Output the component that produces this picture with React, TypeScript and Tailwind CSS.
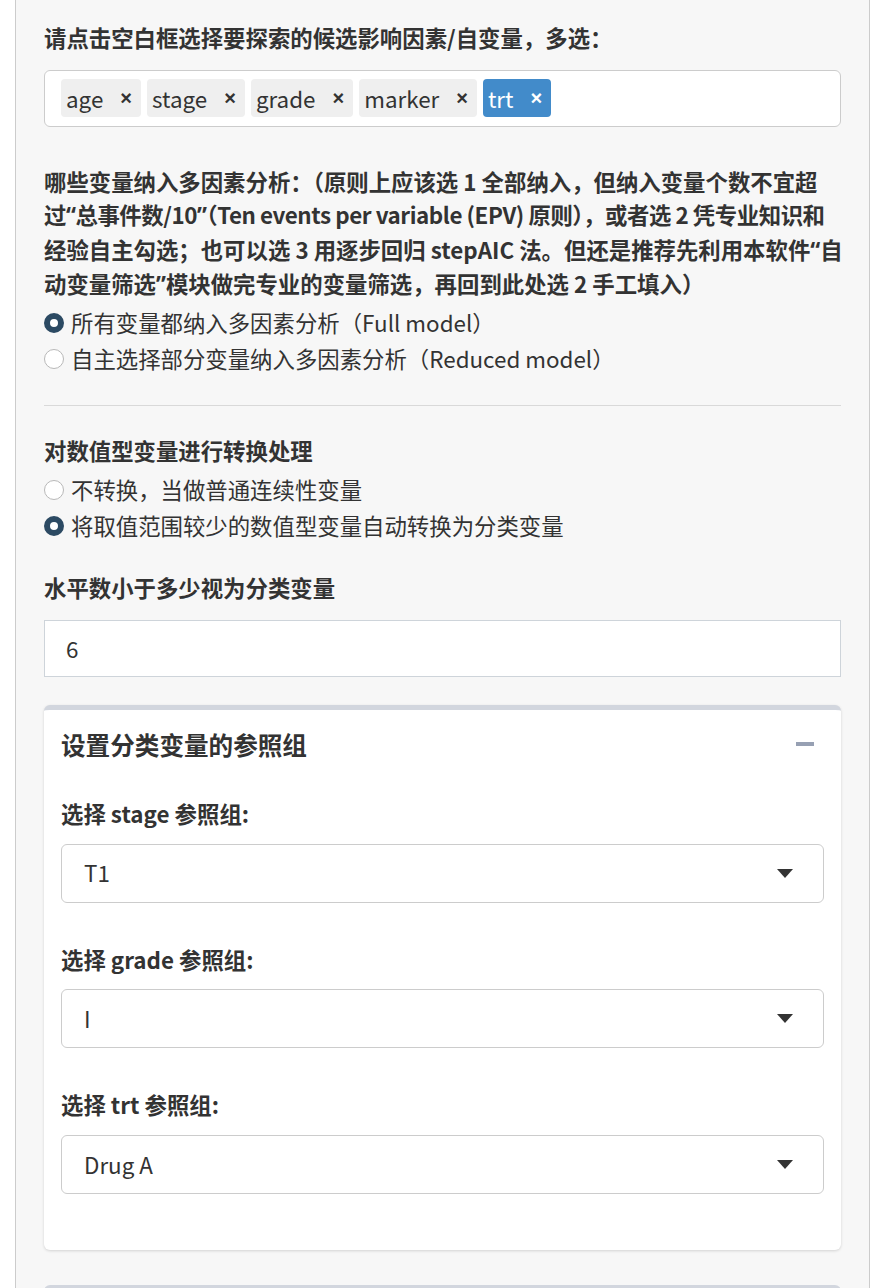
import { useState } from "react";

const font = { fontFamily: '"Noto Sans CJK SC", "Noto Sans", sans-serif' };
const latin = { fontFamily: '"Noto Sans", sans-serif' };

const Radio = ({ checked, label }: { checked: boolean; label: string }) => (
  <div className="flex h-[36px] items-center">
    <span
      className={
        checked
          ? "box-border h-[20px] w-[20px] rounded-full border-[6px] border-[#2c4a63] bg-white"
          : "box-border h-[20px] w-[20px] rounded-full border border-[#b8b8b8] bg-white"
      }
    />
    <span className="ml-[7px] text-[22.4px] leading-[33.6px] text-[#333]">{label}</span>
  </div>
);

const Tag = ({ name, active }: { name: string; active?: boolean }) => (
  <div
    className={
      active
        ? "flex h-[38px] items-center rounded-[4px] bg-[#428bca] pl-[5px] pr-[9px] text-white"
        : "flex h-[38px] items-center rounded-[4px] bg-[#efefef] pl-[5px] pr-[9px] text-[#333]"
    }
  >
    <span className="text-[22.4px] leading-none">{name}</span>
    <span className="ml-[17px] text-[20px] font-black leading-none" style={{ fontFamily: '"Liberation Sans", sans-serif' }}>
      ×
    </span>
  </div>
);

const SelectBox = ({ label, value }: { label: string; value: string }) => (
  <div>
    <div className="text-[22.4px] font-bold leading-[33.6px] text-[#333]">{label}</div>
    <div className="mt-[13px] flex h-[59px] items-center justify-between rounded-[6px] border border-[#cccccc] bg-white pl-[22px] pr-[30px]">
      <span className="text-[22.4px] text-[#333]">{value}</span>
      <svg width="16" height="9" viewBox="0 0 16 9">
        <path d="M0 0 L16 0 L8 9 Z" fill="#333" />
      </svg>
    </div>
  </div>
);

export default function App() {
  const [level] = useState("6");
  return (
    <div className="h-[1288px] w-[880px] overflow-hidden bg-white" style={font}>
      <div className="ml-[15px] min-h-[1288px] w-[855px] border-x border-[#cccccc] bg-[#f7f7f7] px-[28px] pt-[21px]">
        <div className="text-[22.4px] font-bold leading-[33.6px] text-[#333]">
          请点击空白框选择要探索的候选影响因素/自变量，多选：
        </div>
        <div className="mt-[15px] flex h-[57px] items-center gap-[6px] rounded-[6px] border border-[#cccccc] bg-white px-[16px]">
          <Tag name="age" />
          <Tag name="stage" />
          <Tag name="grade" />
          <Tag name="marker" />
          <Tag name="trt" active />
        </div>

        <div className="mt-[38px] whitespace-nowrap text-[22.4px] font-bold leading-[33.6px] text-[#333]">
          <div>哪些变量纳入多因素分析：（原则上应该选 1 全部纳入，但纳入变量个数不宜超</div>
          <div className="tracking-[-0.45px]">
            过<span style={latin}>“</span>总事件数/10<span style={latin}>”</span>（Ten events per variable (EPV) 原则），或者选 2 凭专业知识和
          </div>
          <div>
            经验自主勾选；也可以选 3 用逐步回归 stepAIC 法。但还是推荐先利用本软件<span style={latin}>“</span>自
          </div>
          <div>
            动变量筛选<span style={latin}>”</span>模块做完专业的变量筛选，再回到此处选 2 手工填入）
          </div>
        </div>
        <div className="mt-[3px]">
          <Radio checked label="所有变量都纳入多因素分析（Full model）" />
          <Radio checked={false} label="自主选择部分变量纳入多因素分析（Reduced model）" />
        </div>

        <hr className="mt-[28px] border-t border-[#d9d9d9]" />

        <div className="mt-[28px] text-[22.4px] font-bold leading-[33.6px] text-[#333]">
          对数值型变量进行转换处理
        </div>
        <div className="mt-[4px]">
          <Radio checked={false} label="不转换，当做普通连续性变量" />
          <Radio checked label="将取值范围较少的数值型变量自动转换为分类变量" />
        </div>

        <div className="mt-[27px] text-[22.4px] font-bold leading-[33.6px] text-[#333]">
          水平数小于多少视为分类变量
        </div>
        <div className="mt-[16px] flex h-[57px] items-center border border-[#ced4da] bg-white pl-[21px] text-[22.4px] text-[#333]">
          {level}
        </div>

        <div className="mt-[28px] rounded-[6px] border-t-[5px] border-[#d2d6de] bg-white px-[17px] pb-[56px] shadow-[0_1px_3px_rgba(0,0,0,0.15)]">
          <div className="flex h-[68px] items-center justify-between pr-[10px]">
            <span className="text-[24.6px] font-bold text-[#333]">设置分类变量的参照组</span>
            <span className="h-[4px] w-[18px] bg-[#97a0b3]" />
          </div>
          <div className="mt-[19px] flex flex-col gap-[40px]">
            <SelectBox label="选择 stage 参照组:" value="T1" />
            <SelectBox label="选择 grade 参照组:" value="I" />
            <SelectBox label="选择 trt 参照组:" value="Drug A" />
          </div>
        </div>

        <div className="mt-[35px] h-[60px] rounded-[6px] border-t-[5px] border-[#d2d6de] bg-white" />
      </div>
    </div>
  );
}
